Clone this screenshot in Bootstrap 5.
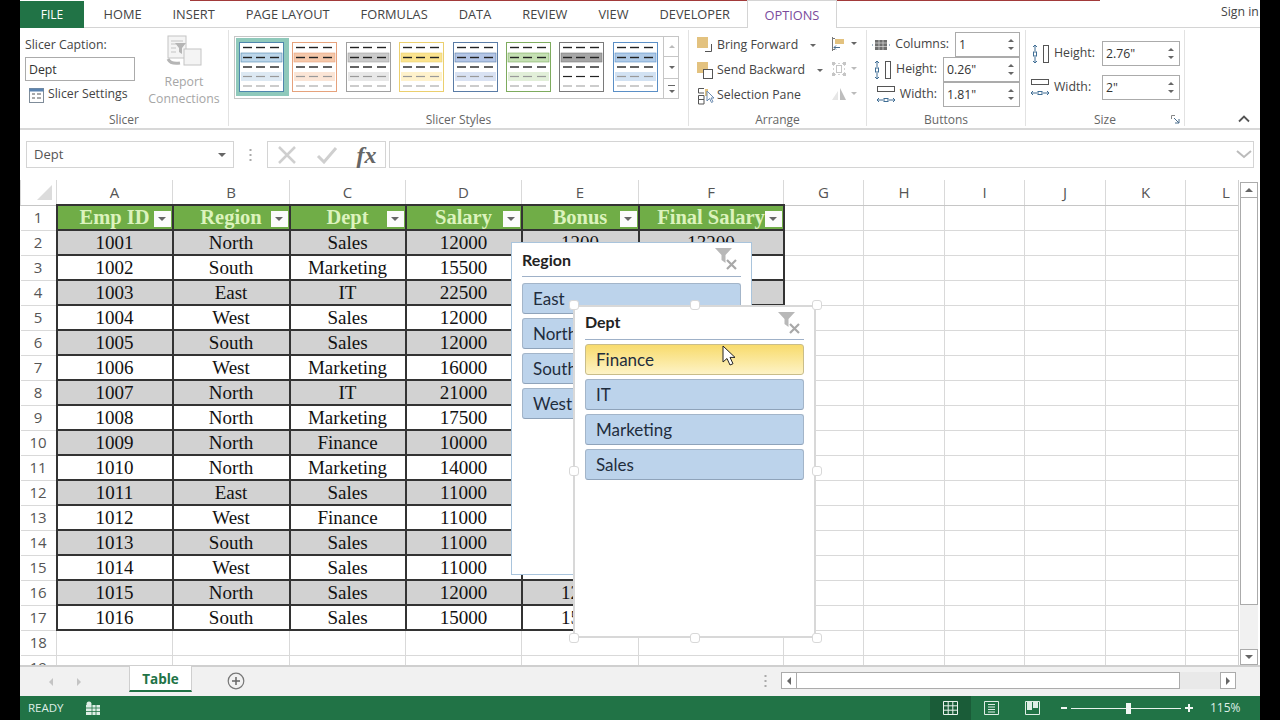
<!DOCTYPE html>
<html lang="en">
<head>
<meta charset="UTF-8">
<title>Excel slicers</title>
<link href="https://cdn.jsdelivr.net/npm/bootstrap@5.3.3/dist/css/bootstrap.min.css" rel="stylesheet">
<style>
  html,body{height:720px;overflow:hidden;background:#000}
  .xl-app{width:1240px;height:720px;margin-left:20px;background:#fff;font-family:"Open Sans",sans-serif;font-size:12.3px;color:#444;overflow:hidden}

  /* title strip + tabs */
  .xl-tabs{height:28px;border-bottom:1px solid #d4d4d4;position:relative;font-size:12.8px;color:#444}
  .xl-redline{position:absolute;left:170px;width:910px;top:0;height:1px;background:#a23a3a}
  .xl-file{width:64px;height:27px;margin-top:1px;background:#217346;color:#fff;font-size:12px}
  .xl-tab{padding:0 15.5px;line-height:29px;white-space:nowrap}
  .xl-tab-on{height:28px;margin-left:1px;padding:0 17px;background:#fff;border:1px solid #d4d4d4;border-bottom:0;color:#7a4b9c;line-height:28px;position:relative}
  .xl-signin{position:absolute;left:1201px;top:3px;white-space:nowrap;font-size:12.3px}

  /* ribbon */
  .xl-ribbon{height:102px;border-bottom:2px solid #d8d8d8;position:relative}
  .xl-group{border-right:1px solid #e2e2e2;height:96px;margin-top:2px;position:relative;flex:none}
  .xl-gname{position:absolute;left:0;right:0;top:82px;text-align:center;font-size:12px;color:#666;line-height:16px}
  .g-slicer{width:209px}
  .g-styles{width:460px}
  .g-arrange{width:178px}
  .g-buttons{width:159px}
  .g-size{width:159px}
  .xl-slcol{width:120px;padding:4px 0 0 1px}
  .xl-cap{padding-top:2px;margin-bottom:3px;line-height:18px}
  .xl-tbox{width:110px;height:24px;border:1px solid #ababab;padding-left:3px;line-height:23px;color:#333}
  .xl-setrow{margin-top:1px}
  .xl-row{height:25px;white-space:nowrap}
  .xl-disabled{color:#a6a6a6}
  .xl-report{width:88px;line-height:17px;padding-top:5px}
  .xl-gallery{width:445px;height:63px;margin:6px 0 0 5px;border:1px solid #c6c6c6;padding:1px}
  .xl-thumb{width:53.4px;height:58px;flex:none;padding:4px 0 0 3px}
  .xl-thumb-on{background:#8fc9bb}
  .xl-gscroll{width:17px;margin-left:auto;margin-top:-2px;margin-right:-2px;margin-bottom:-2px;border-left:1px solid #c6c6c6}
  .xl-gscroll div{flex:1;border-bottom:1px solid #c6c6c6}
  .xl-gscroll div:last-child{border-bottom:0}
  .xl-gbar{width:7px;height:1px;background:#666}
  .xl-arrcol{width:142px;padding:3px 0 0 8px}
  .xl-arrcol .xl-row{gap:2px}
  .xl-arrcaret{margin-left:10px}
  .xl-arrcol2{padding-top:1px}
  .xl-spin{height:25px;border:1px solid #ababab;padding-left:3px;line-height:23px;color:#333;flex:none;position:relative;background:#fff}
  .xl-spin::before,.xl-spin::after{content:"";position:absolute;right:5px;border-left:3px solid transparent;border-right:3px solid transparent}
  .xl-spin::before{top:6px;border-bottom:3px solid #666}
  .xl-spin::after{bottom:6px;border-top:3px solid #666}
  .sp-col{width:65px}.sp-h{width:77px}
  .sp-size{width:78px}
  .xl-btnrow{padding-right:5px}
  .xl-btnrow1{padding-top:2px}
  .xl-lab{margin-right:6px}
  .xl-szrow1{padding-top:11px}
  .xl-szrow2{padding-top:9px}
  .xl-szlabel{width:44px}
  .xl-launch{position:absolute;right:4px;top:85px}
  .xl-collapse{position:absolute;left:1218px;top:87px}
  .xl-caret{width:0;height:0;border-left:3px solid transparent;border-right:3px solid transparent;border-top:3px solid #666;flex:none}
  .xl-caret-off{border-top-color:#bbb}
  .xl-caret-big{border-width:4px 4px 0}

  /* formula bar */
  .xl-formula{height:50px;padding:11px 6px 0 6px}
  .xl-fbox{height:27px;border:1px solid #d4d4d4;background:#fff}
  .xl-name{width:208px;padding:0 7px;color:#555;font-size:13px}
  .xl-dots{width:33px;height:27px;color:#999}
  .xl-fx{width:120px;padding:0 9px}
  .xl-fxt{font-family:"Liberation Serif",serif;font-style:italic;font-weight:700;font-size:24px;color:#666;line-height:24px}
  .xl-finput{margin-left:3px;width:866px;padding-right:1px}

  /* sheet */
  .xl-sheet{height:485px;position:relative;overflow:hidden}
  .xl-grid-wrap{width:1219px;height:485px;overflow:hidden;flex:none;border-right:1px solid #cfcfcf}
  .xl-grid{table-layout:fixed;border-collapse:collapse;width:1246px;font-family:"Liberation Serif",serif;font-size:19px;line-height:21px;color:#111}
  .xl-grid td,.xl-grid th{border:1px solid #d9d9d9;height:25px;padding:0;text-align:center;vertical-align:middle;font-weight:400;white-space:nowrap;overflow:hidden}
  .xl-grid thead th{font-family:"Open Sans",sans-serif;font-size:15px;color:#555;border-top:0;border-bottom-color:#c6c6c6}
  .xl-grid .xl-rh{font-family:"Open Sans",sans-serif;font-size:15px;color:#555;border-left:0}
  .xl-grid td.xl-cell{border:2px solid #333}
  .xl-grid td.xl-alt{background:#d2d2d2}
  .xl-grid td.xl-head{background:#70ad47;color:#dcf3bd;font-weight:700;font-size:20.5px;border:2px solid #333;position:relative;overflow:visible}
  .xl-filter{position:absolute;right:1px;top:5px;width:17px;height:16px;background:#fbfbfb;display:flex;align-items:center;justify-content:center}
  .xl-corner{width:0;height:0;margin:0 0 0 16px;border-left:15px solid transparent;border-bottom:15px solid #dcdcdc}

  /* v scrollbar */
  .xl-vscroll{width:18px;margin-left:1px;margin-top:2px;height:483px;background:#f1f1f1}
  .xl-sbtn{height:16px;border:1px solid #ababab;background:#fff;flex:none;display:flex;align-items:center;justify-content:center}
  .xl-sthumb{height:407px;background:#fff;border:1px solid #ababab;border-top:0;flex:none}
  .xl-up{border-left:4px solid transparent;border-right:4px solid transparent;border-bottom:4px solid #666}
  .xl-dn{border-left:4px solid transparent;border-right:4px solid transparent;border-top:4px solid #666}
  .xl-lt{border-top:4px solid transparent;border-bottom:4px solid transparent;border-right:4px solid #666}
  .xl-rt{border-top:4px solid transparent;border-bottom:4px solid transparent;border-left:4px solid #666}
  .xl-up-s{border-width:0 3px 3px;border-bottom-color:#bbb}
  .xl-dn-s{border-width:3px 3px 0}
  .xl-lt-off{border-right-color:#c4c4c4;border-width:4px 4px 4px 0}
  .xl-rt-off{border-left-color:#c4c4c4;border-width:4px 0 4px 4px}

  /* slicer windows over the sheet */
  .xl-slicer{position:absolute;background:#fff;padding:0 10px}
  .sl-region{left:491px;top:62px;width:241px;height:333px;border:1px solid #a9c4dc}
  .sl-dept{left:553px;top:125px;width:243px;height:333px;border:2px solid #d8d8d8}
  .xl-sltitle{height:34px;border-bottom:1px solid #9fb1c8;font-family:Lato,sans-serif;font-weight:700;font-size:16px;color:#222;line-height:33px;margin-bottom:6px;position:relative}
  .sl-dept .xl-sltitle{height:33px;line-height:30px;margin-bottom:4px}
  .xl-slclear{position:absolute;right:3px;top:4px}
  .xl-slbtn{height:31px;margin-bottom:4px;border:1px solid #a3b5c9;border-bottom-color:#8fa3ba;border-radius:3px;background:#bcd3eb;font-family:Lato,sans-serif;font-size:17px;color:#1f2d3d;line-height:30px;padding-left:10px;white-space:nowrap;overflow:hidden}
  .xl-slbtn-hot{background:linear-gradient(#f8db6c,#fdf3c6);border-color:#c9bd8a}
  .xl-handle{position:absolute;width:10px;height:10px;background:#fff;border:1px solid #d8d8d8;border-radius:3px}
  .h-l{left:549px}.h-c{left:670px}.h-r{left:792px}
  .h-t{top:120px}.h-m{top:286px}.h-b{top:453px}
  .xl-cursor{position:absolute;left:702px;top:165px}

  /* sheet tabs */
  .xl-sheetbar{height:31px;background:#f1f1f1;border-top:2px solid #cfcfcf;position:relative}
  .xl-navs{width:109px;padding-left:29px;gap:24px;color:#bbb}
  .xl-sheettab{width:63px;height:26px;background:#fff;border:1px solid #cfcfcf;border-top:0;border-bottom:2px solid #217346;color:#217346;font-weight:700;font-size:13.5px;line-height:27px;text-align:center;margin-top:-1px}
  .xl-plus{margin-left:35px;height:28px}
  .xl-hdots{margin-left:519px;width:17px;height:28px}
  .xl-hscroll{width:455px;height:17px;margin-top:5px;background:#e9e9e9}
  .xl-hthumb{width:383px;background:#fff;border:1px solid #ababab;border-left:0}
  .xl-hbtn{width:16px;background:#fff;border:1px solid #ababab;display:flex;align-items:center;justify-content:center;flex:none}

  /* status bar */
  .xl-status{height:24px;background:#217346;color:#dfeee6;font-size:11.5px;padding-left:8px}
  .xl-ready{width:57px}
  .xl-viewon{width:41px;height:24px;background:#1a5c38;margin-left:829px}
  .xl-view{width:41px}
  .xl-minus{margin-left:8px}
  .xl-slider{width:110px;height:1px;background:#e8f2ec;position:relative;margin:0 4px}
  .xl-knob{position:absolute;left:55px;top:-5px;width:5px;height:11px;background:#f2f7f4}
  .xl-pct{margin-left:17px;font-size:12px}
</style>
</head>
<body>
<div class="xl-app d-flex flex-column">

  <!-- tabs -->
  <div class="xl-tabs d-flex flex-shrink-0">
    <div class="xl-redline"></div>
    <div class="xl-file d-flex align-items-center justify-content-center">FILE</div>
    <div class="xl-tab ms-1">HOME</div>
    <div class="xl-tab">INSERT</div>
    <div class="xl-tab">PAGE LAYOUT</div>
    <div class="xl-tab">FORMULAS</div>
    <div class="xl-tab">DATA</div>
    <div class="xl-tab">REVIEW</div>
    <div class="xl-tab">VIEW</div>
    <div class="xl-tab">DEVELOPER</div>
    <div class="xl-tab-on">OPTIONS</div>
    <div class="xl-signin">Sign in</div>
  </div>

  <!-- ribbon -->
  <div class="xl-ribbon d-flex flex-shrink-0">
    <div class="xl-group g-slicer d-flex">
      <div class="xl-slcol">
        <div class="xl-cap ms-1">Slicer Caption:</div>
        <div class="xl-tbox ms-1">Dept</div>
        <div class="xl-row xl-setrow d-flex align-items-center gap-1 ms-2">
          <svg width="15" height="16" viewBox="0 0 15 16"><rect x=".5" y="1.5" width="14" height="14" fill="#fff" stroke="#7f8c99"/><rect x=".5" y="1.5" width="14" height="3" fill="#5b84b1"/><path d="M3 7h3M3 11h3M8 7h4M8 11h4" stroke="#555"/></svg>
          <span>Slicer Settings</span>
        </div>
      </div>
      <div class="xl-report xl-disabled text-center">
        <svg width="40" height="34" viewBox="0 0 40 34"><rect x="4" y="1" width="18" height="22" fill="#f4f4f4" stroke="#c4c4c4"/><path d="M7 6h12M7 9h5M7 13h5M7 17h5" stroke="#c4c4c4"/><path d="M11 8h11l-4 5v6l-3-2v-4z" fill="#b5b5b5"/><rect x="20" y="14" width="17" height="16" fill="#f4f4f4" stroke="#c4c4c4"/><path d="M4 24c2 4 6 5 12 4" fill="none" stroke="#b5b5b5" stroke-width="3"/></svg>
        <div class="mt-1">Report<br>Connections</div>
      </div>
      <div class="xl-gname">Slicer</div>
    </div>

    <div class="xl-group g-styles">
      <div class="xl-gallery d-flex" id="gallery">
        <div class="xl-gscroll d-flex flex-column" id="gscroll">
          <div class="d-flex align-items-center justify-content-center"><span class="xl-up xl-up-s"></span></div>
          <div class="d-flex align-items-center justify-content-center"><span class="xl-dn xl-dn-s"></span></div>
          <div class="d-flex flex-column align-items-center justify-content-center gap-1"><span class="xl-gbar"></span><span class="xl-dn xl-dn-s"></span></div>
        </div>
      </div>
      <div class="xl-gname">Slicer Styles</div>
    </div>

    <div class="xl-group g-arrange d-flex">
      <div class="xl-arrcol">
        <div class="xl-row d-flex align-items-center">
          <svg width="18" height="18" viewBox="0 0 18 18"><rect x="0" y="0" width="11" height="11" fill="#e3c27f"/><path d="M14.500 7v7.500H8" fill="none" stroke="#555"/></svg>
          <span>Bring Forward</span><span class="xl-caret xl-arrcaret"></span>
        </div>
        <div class="xl-row d-flex align-items-center">
          <svg width="18" height="18" viewBox="0 0 18 18"><rect x="0" y="0" width="11" height="11" fill="#e3c27f"/><rect x="6.500" y="7.500" width="9" height="9" fill="#fff" stroke="#555"/></svg>
          <span>Send Backward</span><span class="xl-caret xl-arrcaret"></span>
        </div>
        <div class="xl-row d-flex align-items-center">
          <svg width="18" height="18" viewBox="0 0 18 18"><path d="M7 1.500H1.500V6H7M1.500 8.500H7V12.500H1.500zM1.500 12.500H7V17H1.500z" fill="none" stroke="#555"/><rect x="8" y="2" width="3" height="7" fill="#e3c27f"/><path d="M10 4v10l2.500-2.500 2 4 1.500-.8-2-3.700H17z" fill="#fff" stroke="#6b8bb0"/></svg>
          <span>Selection Pane</span>
        </div>
      </div>
      <div class="xl-arrcol2 d-flex flex-column">
        <div class="xl-row d-flex align-items-center gap-1">
          <svg width="16" height="16" viewBox="0 0 16 16"><path d="M1.500 1v14M1.500 2.500H4M1.500 13.500H4" fill="none" stroke="#777"/><rect x="4" y="3" width="9" height="5" fill="#e3c27f"/><path d="M9 11.500H3m2-2-2 2 2 2" fill="none" stroke="#4a6d8c"/></svg>
          <span class="xl-caret"></span>
        </div>
        <div class="xl-row d-flex align-items-center gap-1">
          <svg width="16" height="16" viewBox="0 0 16 16"><path d="M2.500 3v10M13.500 3v10M3 2.500h10M3 13.500h10" fill="none" stroke="#d2d2d2" stroke-dasharray="2 2"/><path d="M1 1h3v3H1zM12 1h3v3h-3zM1 12h3v3H1zM12 12h3v3h-3z" fill="#c6c6c6"/><rect x="5.500" y="4.500" width="5" height="7" fill="none" stroke="#c6c6c6"/></svg>
          <span class="xl-caret xl-caret-off"></span>
        </div>
        <div class="xl-row d-flex align-items-center gap-1">
          <svg width="16" height="16" viewBox="0 0 16 16"><path d="M9 2v12h6z" fill="#bdbdbd"/><path d="M7 5v9H1z" fill="#e6e6e6"/></svg>
          <span class="xl-caret xl-caret-off"></span>
        </div>
      </div>
      <div class="xl-gname">Arrange</div>
    </div>

    <div class="xl-group g-buttons">
      <div class="xl-btnrow xl-btnrow1 d-flex align-items-center justify-content-end">
        <svg class="me-1" width="20" height="12" viewBox="0 0 20 12"><rect x="4" y="1" width="12" height="10" fill="#6e6e6e"/><path d="M8 1v10M12 1v10M4 4h12M4 7.500h12" stroke="#ddd" stroke-width=".7"/><path d="M1 6h1M18 6h1" stroke="#4a6d8c"/></svg>
        <span class="xl-lab">Columns:</span><div class="xl-spin sp-col">1</div>
      </div>
      <div class="xl-btnrow d-flex align-items-center justify-content-end">
        <svg class="me-1" width="20" height="20" viewBox="0 0 20 20"><path d="M5 1v6M3 3l2-2 2 2M5 19v-6M3 17l2 2 2-2" fill="none" stroke="#3f6d94"/><rect x="3.500" y="8" width="3" height="4" fill="none" stroke="#3f6d94"/><rect x="13.500" y="1.500" width="5" height="17" fill="#fff" stroke="#555"/></svg>
        <span class="xl-lab">Height:</span><div class="xl-spin sp-h">0.26"</div>
      </div>
      <div class="xl-btnrow d-flex align-items-center justify-content-end">
        <svg class="me-1" width="20" height="20" viewBox="0 0 20 20"><rect x="1.500" y="1.500" width="17" height="5" fill="#fff" stroke="#555"/><path d="M1 15h6M3 13l-2 2 2 2M19 15h-6M17 13l2 2-2 2" fill="none" stroke="#3f6d94"/><rect x="8" y="13.500" width="4" height="3" fill="none" stroke="#3f6d94"/></svg>
        <span class="xl-lab">Width:</span><div class="xl-spin sp-h">1.81"</div>
      </div>
      <div class="xl-gname">Buttons</div>
    </div>

    <div class="xl-group g-size">
      <div class="xl-szrow1 d-flex align-items-center ps-1 gap-1">
        <svg width="20" height="20" viewBox="0 0 20 20"><path d="M5 1v6M3 3l2-2 2 2M5 19v-6M3 17l2 2 2-2" fill="none" stroke="#3f6d94"/><rect x="3.500" y="8" width="3" height="4" fill="none" stroke="#3f6d94"/><rect x="13.500" y="1.500" width="5" height="17" fill="#fff" stroke="#555"/></svg>
        <span class="xl-szlabel">Height:</span><div class="xl-spin sp-size">2.76"</div>
      </div>
      <div class="xl-szrow2 d-flex align-items-center ps-1 gap-1">
        <svg width="20" height="20" viewBox="0 0 20 20"><rect x="1.500" y="1.500" width="17" height="5" fill="#fff" stroke="#555"/><path d="M1 15h6M3 13l-2 2 2 2M19 15h-6M17 13l2 2-2 2" fill="none" stroke="#3f6d94"/><rect x="8" y="13.500" width="4" height="3" fill="none" stroke="#3f6d94"/></svg>
        <span class="xl-szlabel">Width:</span><div class="xl-spin sp-size">2"</div>
      </div>
      <div class="xl-gname">Size</div>
      <svg class="xl-launch" width="9" height="9" viewBox="0 0 9 9"><path d="M.5 4V.5H4" fill="none" stroke="#888"/><path d="M3 3l5 5M8 4v4H4" fill="none" stroke="#4a6d8c"/></svg>
    </div>

    <svg class="xl-collapse" width="12" height="8" viewBox="0 0 12 8"><path d="M1 6.500l5-5 5 5" fill="none" stroke="#555" stroke-width="1.800"/></svg>
  </div>

  <!-- formula bar -->
  <div class="xl-formula d-flex align-items-start flex-shrink-0">
    <div class="xl-fbox xl-name d-flex align-items-center justify-content-between">
      <span>Dept</span><span class="xl-caret xl-caret-big"></span>
    </div>
    <div class="xl-dots d-flex align-items-center justify-content-center"><svg width="3" height="12" viewBox="0 0 3 12"><path d="M1.500 0v2M1.500 5v2M1.500 10v2" stroke="#aaa" stroke-width="2"/></svg></div>
    <div class="xl-fbox xl-fx d-flex align-items-center justify-content-between">
      <svg width="20" height="18" viewBox="0 0 20 18"><path d="M2 1l16 16M18 1L2 17" stroke="#cfcfcf" stroke-width="2.500"/></svg>
      <svg width="22" height="18" viewBox="0 0 22 18"><path d="M2 10l6 6L20 2" fill="none" stroke="#cfcfcf" stroke-width="3"/></svg>
      <span class="xl-fxt">fx</span>
    </div>
    <div class="xl-fbox xl-finput d-flex align-items-center justify-content-end">
      <svg width="16" height="9" viewBox="0 0 16 9"><path d="M1 1l7 6 7-6" fill="none" stroke="#bbb" stroke-width="2"/></svg>
    </div>
  </div>

  <!-- sheet -->
  <div class="xl-sheet d-flex flex-shrink-0">
    <div class="xl-grid-wrap">
      <table class="xl-grid">
        <colgroup id="cols"></colgroup>
        <thead><tr id="headrow"></tr></thead>
        <tbody id="rows"></tbody>
      </table>
    </div>
    <div class="xl-vscroll d-flex flex-column">
      <div class="xl-sbtn"><span class="xl-up"></span></div>
      <div class="xl-sthumb"></div>
      <div class="xl-sbtn mt-auto"><span class="xl-dn"></span></div>
    </div>

    <!-- Region slicer -->
    <div class="xl-slicer sl-region">
      <div class="xl-sltitle">Region
        <svg class="xl-slclear" width="24" height="24" viewBox="0 0 24 24"><use href="#clearicon"/></svg>
      </div>
      <div class="xl-slbtn">East</div>
      <div class="xl-slbtn">North</div>
      <div class="xl-slbtn">South</div>
      <div class="xl-slbtn">West</div>
    </div>

    <!-- Dept slicer -->
    <div class="xl-slicer sl-dept">
      <div class="xl-sltitle">Dept
        <svg class="xl-slclear" width="24" height="24" viewBox="0 0 24 24"><use href="#clearicon"/></svg>
      </div>
      <div class="xl-slbtn xl-slbtn-hot">Finance</div>
      <div class="xl-slbtn">IT</div>
      <div class="xl-slbtn">Marketing</div>
      <div class="xl-slbtn">Sales</div>
    </div>
    <span class="xl-handle h-l h-t"></span>
    <span class="xl-handle h-c h-t"></span>
    <span class="xl-handle h-r h-t"></span>
    <span class="xl-handle h-l h-m"></span>
    <span class="xl-handle h-r h-m"></span>
    <span class="xl-handle h-l h-b"></span>
    <span class="xl-handle h-c h-b"></span>
    <span class="xl-handle h-r h-b"></span>

    <svg class="xl-cursor" width="14" height="22" viewBox="0 0 14 22"><path d="M1 1v16l4-3.500 3 6.500 3-1.300-3-6.300h5z" fill="#fff" stroke="#222"/></svg>
  </div>

  <!-- sheet tabs -->
  <div class="xl-sheetbar d-flex flex-shrink-0">
    <div class="xl-navs d-flex align-items-center">
      <span class="xl-lt xl-lt-off"></span>
      <span class="xl-rt xl-rt-off"></span>
    </div>
    <div class="xl-sheettab">Table</div>
    <div class="xl-plus d-flex align-items-center">
      <svg width="18" height="18" viewBox="0 0 18 18"><circle cx="9" cy="9" r="7.800" fill="none" stroke="#777" stroke-width="1.200"/><path d="M5 9h8M9 5v8" stroke="#666" stroke-width="1.500"/></svg>
    </div>
    <div class="xl-hdots d-flex align-items-center"><svg width="3" height="12" viewBox="0 0 3 12"><path d="M1.500 0v2M1.500 5v2M1.500 10v2" stroke="#aaa" stroke-width="2"/></svg></div>
    <div class="xl-hscroll d-flex">
      <div class="xl-hbtn"><span class="xl-lt"></span></div>
      <div class="xl-hthumb"></div>
      <div class="xl-hbtn ms-auto"><span class="xl-rt"></span></div>
    </div>
  </div>

  <!-- status bar -->
  <div class="xl-status d-flex align-items-center flex-shrink-0">
    <span class="xl-ready">READY</span>
    <svg width="16" height="15" viewBox="0 0 16 15"><rect x="1" y="4" width="14" height="10" fill="#dfeee6"/><circle cx="4" cy="3" r="2.500" fill="#dfeee6"/><path d="M7 4v10M11 4v10M1 7h14M1 10.500h14" stroke="#217346" stroke-width=".8"/></svg>
    <div class="xl-viewon d-flex align-items-center justify-content-center">
      <svg width="15" height="14" viewBox="0 0 15 14"><path d="M.5.5h14v13H.5zM5.200.500v13M9.800.500v13M.5 4.800h14M.5 9.200h14" fill="none" stroke="#eaf4ee"/></svg>
    </div>
    <div class="xl-view d-flex justify-content-center">
      <svg width="15" height="14" viewBox="0 0 15 14"><path d="M.5.5h14v13H.5z" fill="none" stroke="#dfeee6"/><path d="M4 3.500h7M4 6h7M4 8.500h7M4 11h7" stroke="#dfeee6"/></svg>
    </div>
    <div class="xl-view d-flex justify-content-center">
      <svg width="15" height="14" viewBox="0 0 15 14"><path d="M.5.5h14v13H.5z" fill="none" stroke="#dfeee6"/><rect x="2" y="1" width="5" height="8" fill="#dfeee6"/><rect x="8" y="1" width="5" height="6" fill="#dfeee6"/></svg>
    </div>
    <svg class="xl-minus" width="6" height="2" viewBox="0 0 6 2"><rect width="6" height="2" fill="#f2f7f4"/></svg>
    <div class="xl-slider"><span class="xl-knob"></span></div>
    <svg width="8" height="8" viewBox="0 0 8 8"><path d="M0 4h8M4 0v8" stroke="#f2f7f4" stroke-width="2"/></svg>
    <span class="xl-pct">115%</span>
  </div>
</div>

<svg width="0" height="0" class="position-absolute">
  <defs>
    <g id="clearicon">
      <path d="M1 1h17l-6.500 7v8l-4-3V8z" fill="#b8b8b8"/>
      <path d="M13 13l9 9M22 13l-9 9" stroke="#a8a8a8" stroke-width="2.200"/>
    </g>
  </defs>
</svg>

<script>
  // ribbon gallery thumbnails: border, strong row, light row
  const styles=[
    ['#4f86ad','#bcd6ea','#dde9f3',1],['#e6a27c','#f5c8aa','#fbe5d6',0],['#a0a0a0','#cbcbcb','#e8e8e8',0],['#ebcf6e','#fbe38e','#fff2cc',0],
    ['#5a7ca6','#b4c6e7','#d9e2f3',0],['#7eab5e','#c5e0b3','#e2efd9',0],['#7a7a7a','#a6a6a6','#ffffff',0],['#5b8fc6','#b0cbe8','#d2e2f3',0]
  ];
  function dashes(y,c,w){
    return [4,17,31].map(x=>`<path d="M${x} ${y}h9" stroke="${c}" stroke-width="${w}"/>`).join('');
  }
  const gallery=document.getElementById('gallery'), gscroll=document.getElementById('gscroll');
  styles.forEach((s,i)=>{
    const el=document.createElement('div');
    el.className='xl-thumb'+(s[3]?' xl-thumb-on':'');
    const last=i==6?'#222':'#999';
    el.innerHTML=`<svg width="45" height="50" viewBox="0 0 45 50"><rect x=".5" y=".5" width="44" height="49" fill="#fff" stroke="${s[0]}"/>
      <rect x="2" y="11" width="41" height="9" fill="${s[1]}" stroke="${s[0]}" stroke-width=".6"/>
      <rect x="2" y="30" width="41" height="9" fill="${s[2]}"/>
      ${dashes(5.500,'#222',1.400)}${dashes(15.500,'#222',1.400)}${dashes(25,'#222',1.400)}${dashes(34.500,last,1.200)}${dashes(44,'#999',1)}</svg>`;
    gallery.insertBefore(el,gscroll);
  });

  // worksheet
  const widths=[36,116,117,116,116,117,145,80,81,80,81,80,81];
  document.getElementById('cols').innerHTML=widths.map(w=>`<col width="${w}">`).join('');
  document.getElementById('headrow').innerHTML='<th><div class="xl-corner"></div></th>'+
    ['A','B','C','D','E','F','G','H','I','J','K','L'].map(c=>`<th>${c}</th>`).join('');

  const emp=[
    [1001,'North','Sales',12000],[1002,'South','Marketing',15500],[1003,'East','IT',22500],[1004,'West','Sales',12000],
    [1005,'South','Sales',12000],[1006,'West','Marketing',16000],[1007,'North','IT',21000],[1008,'North','Marketing',17500],
    [1009,'North','Finance',10000],[1010,'North','Marketing',14000],[1011,'East','Sales',11000],[1012,'West','Finance',11000],
    [1013,'South','Sales',11000],[1014,'West','Sales',11000],[1015,'North','Sales',12000],[1016,'South','Sales',15000]
  ];
  const blanks=n=>'<td></td>'.repeat(n);
  const arrow='<span class="xl-filter"><span class="xl-caret xl-caret-big"></span></span>';
  let html='<tr><td class="xl-rh">1</td>'+
    ['Emp ID','Region','Dept','Salary','Bonus','Final Salary'].map(h=>`<td class="xl-head">${h}${arrow}</td>`).join('')+blanks(6)+'</tr>';
  emp.forEach((r,i)=>{
    const vals=[...r,r[3]*.1,r[3]*1.1].map(v=>Math.round(v)||v);
    const alt=i%2==0?' xl-alt':'';
    html+=`<tr><td class="xl-rh">${i+2}</td>`+vals.map(v=>`<td class="xl-cell${alt}">${v}</td>`).join('')+blanks(6)+'</tr>';
  });
  [18,19].forEach(n=>{html+=`<tr><td class="xl-rh">${n}</td>`+blanks(12)+'</tr>'});
  document.getElementById('rows').innerHTML=html;
</script>
<script src="https://cdn.jsdelivr.net/npm/bootstrap@5.3.3/dist/js/bootstrap.bundle.min.js"></script>
</body>
</html>
